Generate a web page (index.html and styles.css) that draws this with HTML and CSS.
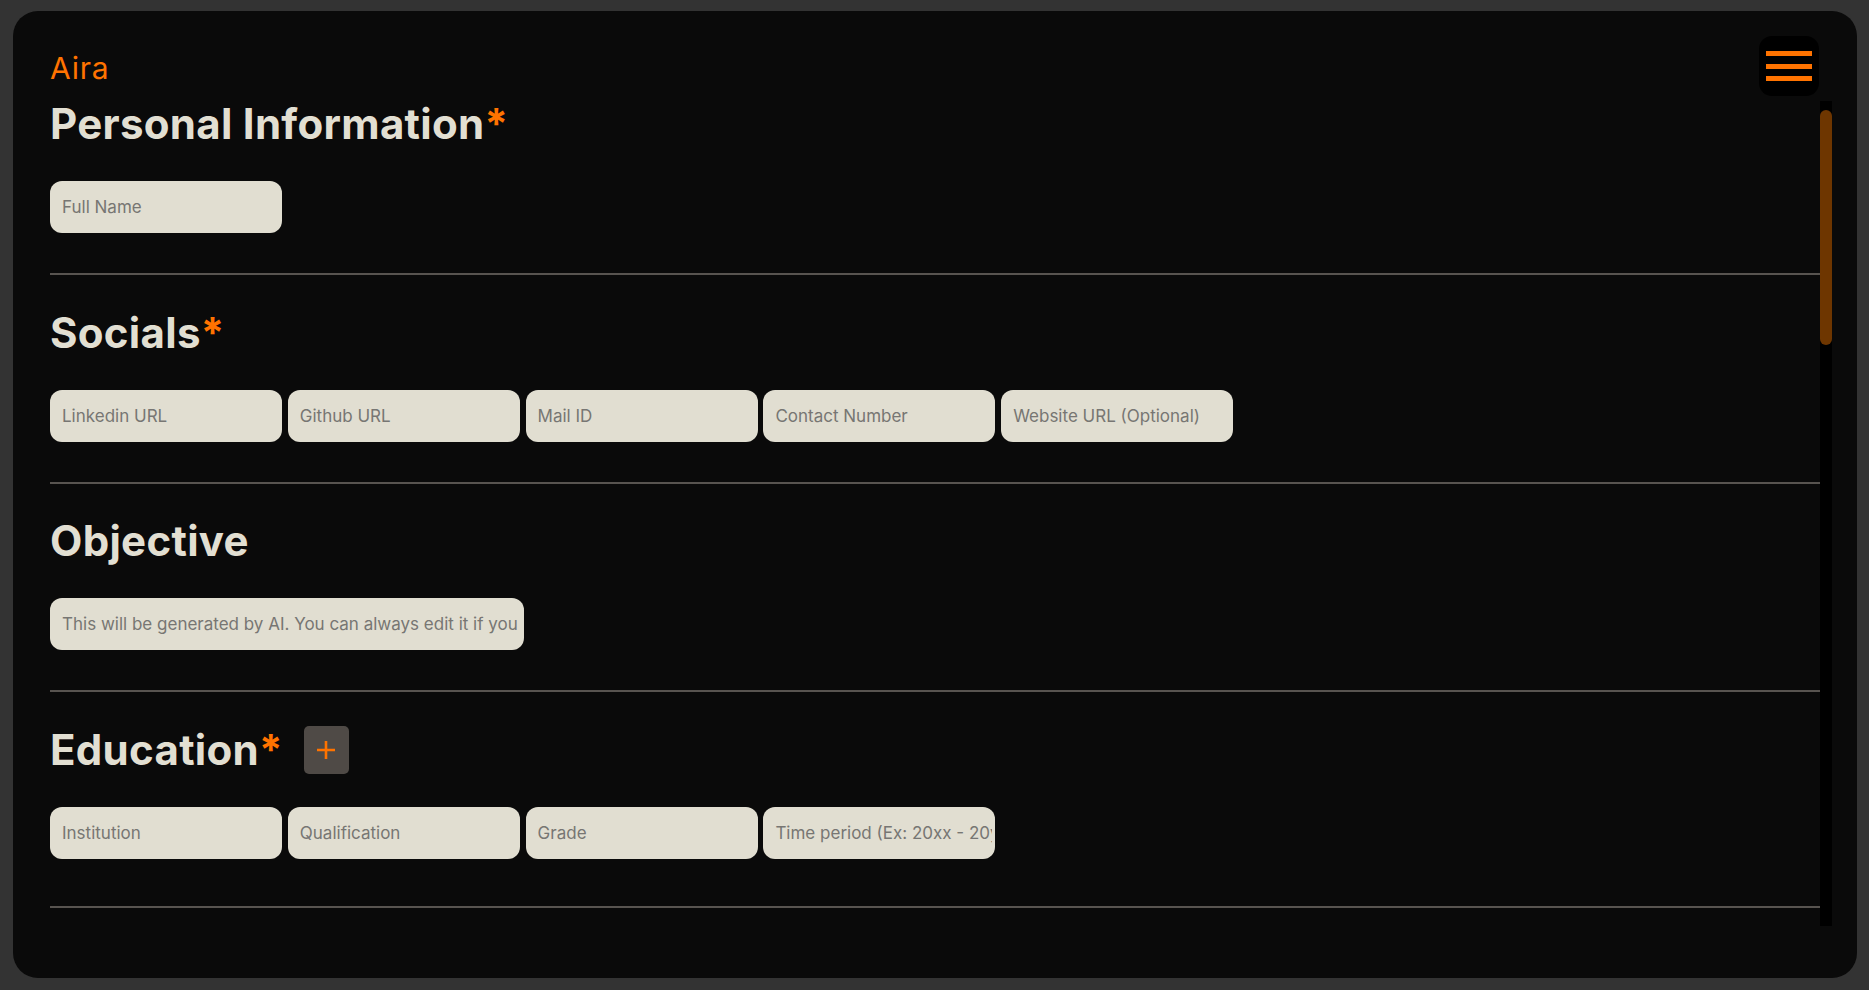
FILE: index.html
```html
<!DOCTYPE html>
<html lang="en">
<head>
<meta charset="utf-8">
<title>Aira</title>
<link rel="stylesheet" href="styles.css">
</head>
<body>
<div class="app">
  <header class="topbar">
    <span class="logo">Aira</span>
    <button class="menu" type="button" aria-label="Menu"><span></span><span></span><span></span></button>
  </header>
  <div class="body">
    <main class="scroll">
      <section class="sec first">
        <div class="head"><h2>Personal Information<span class="req">*</span></h2></div>
        <div class="row"><input class="field" placeholder="Full Name"></div>
        <hr class="div">
      </section>
      <section class="sec">
        <div class="head"><h2>Socials<span class="req">*</span></h2></div>
        <div class="row">
          <input class="field" placeholder="Linkedin URL">
          <input class="field" placeholder="Github URL">
          <input class="field" placeholder="Mail ID">
          <input class="field" placeholder="Contact Number">
          <input class="field" placeholder="Website URL (Optional)">
        </div>
        <hr class="div">
      </section>
      <section class="sec">
        <div class="head"><h2>Objective</h2></div>
        <div class="row"><input class="field wide" placeholder="This will be generated by AI. You can always edit it if you want."></div>
        <hr class="div">
      </section>
      <section class="sec">
        <div class="head"><h2>Education<span class="req">*</span></h2><button class="add" type="button" aria-label="Add education"><svg width="20" height="20" viewBox="0 0 20 20"><path d="M10 1v18M1 10h18" stroke="#ff7300" stroke-width="2.6" fill="none"/></svg></button></div>
        <div class="row">
          <input class="field" placeholder="Institution">
          <input class="field" placeholder="Qualification">
          <input class="field" placeholder="Grade">
          <input class="field" placeholder="Time period (Ex: 20xx - 20yy)">
        </div>
        <hr class="div far">
      </section>
      <section class="sec">
        <div class="head"><h2>Experience</h2><button class="add" type="button" aria-label="Add experience"><svg width="20" height="20" viewBox="0 0 20 20"><path d="M10 1v18M1 10h18" stroke="#ff7300" stroke-width="2.6" fill="none"/></svg></button></div>
        <div class="row">
          <input class="field" placeholder="Company">
          <input class="field" placeholder="Role">
          <input class="field" placeholder="Time period (Ex: 20xx - 20yy)">
        </div>
        <textarea class="area" placeholder="Description"></textarea>
        <hr class="div">
      </section>
      <section class="sec">
        <div class="head"><h2>Projects</h2><button class="add" type="button" aria-label="Add project"><svg width="20" height="20" viewBox="0 0 20 20"><path d="M10 1v18M1 10h18" stroke="#ff7300" stroke-width="2.6" fill="none"/></svg></button></div>
        <div class="row">
          <input class="field" placeholder="Project Name">
          <input class="field" placeholder="Tech Stack">
          <input class="field" placeholder="Link (Optional)">
        </div>
        <textarea class="area" placeholder="Description"></textarea>
        <hr class="div">
      </section>
      <section class="sec">
        <div class="head"><h2>Skills<span class="req">*</span></h2></div>
        <div class="row"><input class="field wide" placeholder="Comma separated skills"></div>
        <hr class="div">
      </section>
      <section class="sec">
        <div class="head"><h2>Achievements</h2></div>
        <div class="row"><input class="field wide" placeholder="Achievement"></div>
        <hr class="div">
      </section>
      <div class="foot"><button class="generate" type="button">Generate Resume</button></div>
    </main>
    <div class="scrollbar" aria-hidden="true"><div class="thumb"></div></div>
  </div>
</div>
</body>
</html>
```

FILE: styles.css
```css
* { box-sizing: border-box; }

html, body {
  margin: 0;
  height: 100%;
}

body {
  background: #333333;
  padding: 11px 12px 12px 13px;
  font-family: Inter, "Liberation Sans", sans-serif;
}

.app {
  height: 100%;
  background: #0a0a0a;
  border-radius: 25px;
  padding: 25px 25px 52px 25px;
  display: flex;
  flex-direction: column;
}

.topbar {
  height: 60px;
  padding: 0 13px 0 12px;
  display: flex;
  align-items: center;
  justify-content: space-between;
  flex: none;
}

.logo {
  color: #ff7300;
  font-size: 30px;
  line-height: 36px;
  letter-spacing: 0.8px;
  padding-top: 3px;
  font-weight: 400;
}

.menu {
  width: 60px;
  height: 60px;
  background: #000;
  border: 0;
  border-radius: 13px;
  padding: 0;
  display: flex;
  flex-direction: column;
  align-items: center;
  justify-content: center;
  gap: 7.5px;
}

.menu span {
  display: block;
  width: 46px;
  height: 5px;
  background: #ff7300;
}

.body {
  flex: 1;
  min-height: 0;
  display: flex;
}

.scroll {
  flex: 1;
  min-width: 0;
  overflow-y: auto;
  scrollbar-width: none;
  padding-left: 12px;
}

.scrollbar {
  width: 12px;
  flex: none;
  margin-top: 5px;
  padding-top: 9px;
  background: #000;
}

.thumb {
  height: 235px;
  border-radius: 6px;
  background: #6e3600;
}

.sec {
  padding-top: 29.5px;
}

.sec.first {
  padding-top: 0;
}

.head {
  height: 56px;
  display: flex;
  align-items: center;
  gap: 21px;
}

.head h2 {
  margin: 0;
  font-size: 42px;
  line-height: 56px;
  font-weight: 700;
  letter-spacing: 0.3px;
  color: #e2dfd2;
  white-space: nowrap;
}

.req {
  color: #ff7300;
}

.add {
  width: 45px;
  height: 48px;
  background: #4f4a46;
  border: 0;
  border-radius: 5px;
  padding: 0;
  display: grid;
  place-items: center;
  flex: none;
}

.add svg {
  display: block;
}

.row {
  display: flex;
  gap: 5.8px;
  margin-top: 29px;
}

.field {
  width: 232px;
  height: 52px;
  border: 0;
  border-radius: 12px;
  background: #e1ded1;
  padding: 0 3px 0 12px;
  font-family: Inter, "Liberation Sans", sans-serif;
  font-size: 17px;
  color: #333;
  outline: none;
}

.field.wide {
  width: 474px;
}

.field::placeholder,
.area::placeholder {
  color: #777673;
  opacity: 1;
}

.area {
  display: block;
  width: 474px;
  height: 120px;
  margin-top: 6px;
  border: 0;
  border-radius: 12px;
  background: #e1ded1;
  padding: 14px 12px;
  font-family: Inter, "Liberation Sans", sans-serif;
  font-size: 17px;
  resize: none;
  outline: none;
}

.div {
  display: block;
  height: 2px;
  margin: 40px 0 0 0;
  border: 0;
  background: #585450;
}

.div.far {
  margin-top: 47px;
}

.foot {
  padding: 29.5px 0 52px 0;
}

.generate {
  height: 52px;
  padding: 0 28px;
  border: 0;
  border-radius: 12px;
  background: #ff7300;
  color: #0a0a0a;
  font-family: Inter, "Liberation Sans", sans-serif;
  font-size: 18px;
  font-weight: 700;
}
```
